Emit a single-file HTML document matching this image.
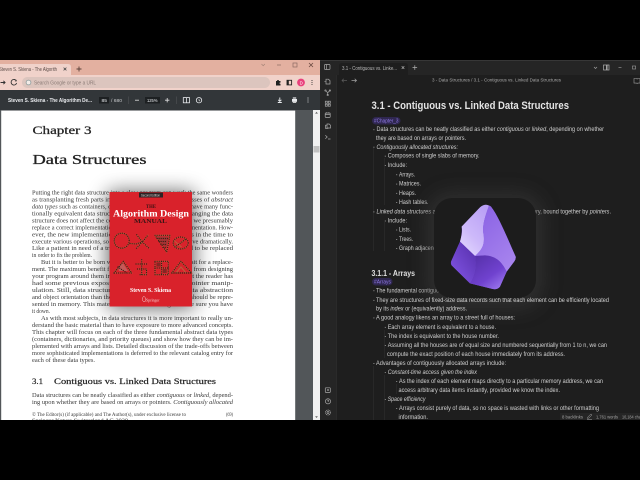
<!DOCTYPE html>
<html><head><meta charset="utf-8"><style>
html,body{margin:0;padding:0;background:#000;width:640px;height:480px;overflow:hidden}
svg{display:block;position:absolute;left:0;top:0}
.o{font-family:"Liberation Sans",sans-serif;font-size:6.3px;fill:#cfcfcf}
.oi{font-family:"Liberation Sans",sans-serif;font-size:6.3px;fill:#cfcfcf;font-style:italic}
.p{font-family:"Liberation Serif",serif;font-size:6.5px;fill:#3a3a3a}
.s{font-family:"Liberation Sans",sans-serif}
</style></head><body>
<svg width="640" height="480" viewBox="0 0 640 480" xmlns="http://www.w3.org/2000/svg">
<defs>
<filter id="b" x="-5%" y="-5%" width="110%" height="110%"><feGaussianBlur stdDeviation="0.3"/></filter>
<filter id="sh" x="-60%" y="-60%" width="220%" height="220%"><feGaussianBlur stdDeviation="10"/></filter>
<filter id="gl" x="-60%" y="-60%" width="220%" height="220%"><feGaussianBlur stdDeviation="9"/></filter>
<linearGradient id="g1" x1="0.8" y1="0" x2="0.2" y2="1"><stop offset="0" stop-color="#b9a0f5"/><stop offset="0.6" stop-color="#cdb9fa"/><stop offset="1" stop-color="#e2d6fd"/></linearGradient>
<linearGradient id="g2" x1="0.2" y1="0" x2="0.8" y2="1"><stop offset="0" stop-color="#8a62e4"/><stop offset="1" stop-color="#a885ee"/></linearGradient>
<linearGradient id="g3" x1="0.1" y1="0" x2="0.9" y2="1"><stop offset="0" stop-color="#5530a8"/><stop offset="0.6" stop-color="#7042cf"/><stop offset="1" stop-color="#a07df0"/></linearGradient>
<linearGradient id="g4" x1="0.9" y1="0.1" x2="0.2" y2="0.9"><stop offset="0" stop-color="#5a32b0"/><stop offset="1" stop-color="#7e52e0"/></linearGradient>
</defs>

<rect width="640" height="480" fill="#000"/>

<!-- LEFT: Chrome -->
<rect x="0" y="60" width="320" height="15" fill="#e3b0a0"/>
<path d="M0 64H68q3 0 3 3V75H0Z" fill="#f0d2ca"/>
<rect x="0" y="75" width="320" height="15" fill="#f1d2ca"/>
<rect x="22" y="77" width="248" height="11" rx="5.5" fill="#dcc5be"/>
<circle cx="28.5" cy="82.5" r="2.4" fill="#f3ece8" stroke="#8b9a9a" stroke-width="0.8"/>
<g filter="url(#b)">
<text class="s" x="-1" y="71" font-size="5.4" fill="#5a4a46" textLength="58" lengthAdjust="spacingAndGlyphs">Steven S. Skiena - The Algorith</text>
<path d="M63.6 67.6l2.8 2.8M66.4 67.6l-2.8 2.8" stroke="#444" stroke-width="0.8"/>
<path d="M76.5 69h5M79 66.5v5" stroke="#5a4038" stroke-width="0.9"/>
<path d="M261.5 64l1.7 1.7 1.700-1.700" stroke="#a58478" stroke-width="0.7" fill="none"/>
<path d="M277 65h4" stroke="#8a6a60" stroke-width="0.7"/>
<rect x="293" y="63" width="4" height="4" fill="none" stroke="#8a6a60" stroke-width="0.7"/>
<path d="M309 63l4 4M313 63l-4 4" stroke="#6a4a40" stroke-width="0.8"/>
<path d="M0.5 82.5h4.5M3.4 80.8l1.7 1.7-1.7 1.7" stroke="#333" stroke-width="0.9" fill="none"/>
<path d="M16.4 81a2.8 2.8 0 1 0 .2 2" stroke="#333" stroke-width="0.9" fill="none"/>
<path d="M16.6 79.6v1.8h-1.8z" fill="#333"/>
<text class="s" x="34" y="84.3" font-size="5.2" fill="#8a7a75" textLength="62" lengthAdjust="spacingAndGlyphs">Search Google or type a URL</text>
<path d="M276 81h1.2v-1h1.6v1h1.7v1.6h-.9v1.2h.9v1.7h-4.5z" fill="#222"/>
<rect x="287" y="80.3" width="4.6" height="4.6" fill="#f1d2ca" stroke="#222" stroke-width="0.9"/>
<rect x="287" y="80.3" width="1.8" height="4.6" fill="#222"/>
<circle cx="301" cy="82.5" r="3.9" fill="#e9407c"/>
<text class="s" x="299.6" y="84.3" font-size="4.4" fill="#fff">D</text>
<circle cx="312" cy="80.6" r=".55" fill="#333"/><circle cx="312" cy="82.5" r=".55" fill="#333"/><circle cx="312" cy="84.4" r=".55" fill="#333"/>
</g>

<!-- PDF toolbar -->
<rect x="0" y="90" width="320" height="20" fill="#323639"/>
<rect x="99" y="97" width="10" height="6.5" fill="#1d2022"/>
<rect x="145" y="97" width="15" height="6.5" fill="#1d2022"/>
<g filter="url(#b)">
<text class="s" x="8" y="102" font-size="5.2" font-weight="bold" fill="#e8eaed" textLength="84" lengthAdjust="spacingAndGlyphs">Steven S. Skiena - The Algorithm De...</text>
<text class="s" x="101.5" y="102" font-size="4.8" fill="#e8eaed" textLength="5.5" lengthAdjust="spacingAndGlyphs">85</text>
<text class="s" x="111" y="102" font-size="4.8" fill="#c8cacc" textLength="11" lengthAdjust="spacingAndGlyphs">/ 680</text>
<rect x="128.3" y="96.5" width=".5" height="7.5" fill="#55595c"/>
<path d="M135 100.2h4" stroke="#e0e0e0" stroke-width=".8"/>
<text class="s" x="147" y="102" font-size="4.8" fill="#e8eaed" textLength="10.5" lengthAdjust="spacingAndGlyphs">125%</text>
<path d="M165 100.2h4.4M167.2 98v4.4" stroke="#e0e0e0" stroke-width=".8"/>
<rect x="176" y="96.5" width=".5" height="7.5" fill="#55595c"/>
<rect x="183.3" y="97.6" width="6.2" height="5.2" fill="none" stroke="#e8eaed" stroke-width=".8"/><path d="M186.4 97.6v5.2" stroke="#e8eaed" stroke-width=".8"/>
<circle cx="199" cy="100.2" r="2.7" fill="none" stroke="#e8eaed" stroke-width=".8"/><path d="M199 98.7v1.6l1 .8" stroke="#e8eaed" stroke-width=".6" fill="none"/>
<path d="M279.8 97.5v3.4M278.2 99.8l1.6 1.6 1.6-1.6M277.8 102.5h4" stroke="#e8eaed" stroke-width=".9" fill="none"/>
<path d="M292 99h5v2.8h-5z" fill="#e8eaed"/><rect x="292.8" y="97.4" width="3.4" height="1.2" fill="#e8eaed"/><rect x="292.8" y="101.6" width="3.4" height="1.4" fill="#ccc"/>
<circle cx="308" cy="98" r=".55" fill="#e8eaed"/><circle cx="308" cy="100" r=".55" fill="#e8eaed"/><circle cx="308" cy="102" r=".55" fill="#e8eaed"/>
</g>

<!-- PDF viewer -->
<rect x="0" y="110" width="320" height="310" fill="#525659"/>
<rect x="1.2" y="110.6" width="294" height="310" fill="#fff"/>
<rect x="313" y="110" width="7" height="310" fill="#f1f1f1"/>
<rect x="313.5" y="146" width="6" height="6.5" fill="#c1c1c1"/>
<path d="M316.5 111.8l-1.4 1.8h2.8z" fill="#666"/><path d="M316.5 418l-1.4-1.8h2.8z" fill="#666"/>

<g filter="url(#b)">
<text x="32.5" y="134" font-family="Liberation Serif,serif" font-size="11.5" fill="#222" stroke="#222" stroke-width=".25" textLength="59" lengthAdjust="spacingAndGlyphs">Chapter 3</text>
<text x="32.5" y="164" font-family="Liberation Serif,serif" font-size="13.5" fill="#222" stroke="#222" stroke-width=".28" textLength="114" lengthAdjust="spacingAndGlyphs">Data Structures</text>
<text class="p" x="32" y="194.5" textLength="201" lengthAdjust="spacingAndGlyphs">Putting the right data structure into a slow program can work the same wonders</text>
<text class="p" x="32" y="201.5" textLength="201" lengthAdjust="spacingAndGlyphs">as transplanting fresh parts into a sick patient. Important classes of <tspan font-style="italic">abstract</tspan></text>
<text class="p" x="32" y="208.4" textLength="201" lengthAdjust="spacingAndGlyphs"><tspan font-style="italic">data types</tspan> such as containers, dictionaries, and priority queues have many func-</text>
<text class="p" x="32" y="215.4" textLength="201" lengthAdjust="spacingAndGlyphs">tionally equivalent data structures that implement them. Changing the data</text>
<text class="p" x="32" y="222.3" textLength="201" lengthAdjust="spacingAndGlyphs">structure does not affect the correctness of the program, since we presumably</text>
<text class="p" x="32" y="229.3" textLength="201" lengthAdjust="spacingAndGlyphs">replace a correct implementation with a different correct implementation. How-</text>
<text class="p" x="32" y="236.3" textLength="201" lengthAdjust="spacingAndGlyphs">ever, the new implementation realizes different trade-offs in the time to</text>
<text class="p" x="32" y="243.3" textLength="201" lengthAdjust="spacingAndGlyphs">execute various operations, so the total performance can improve dramatically.</text>
<text class="p" x="32" y="250.2" textLength="201" lengthAdjust="spacingAndGlyphs">Like a patient in need of a transplant, many programs need to be replaced</text>
<text class="p" x="32" y="257.2" textLength="60" lengthAdjust="spacingAndGlyphs">in order to fix the problem.</text>
<text class="p" x="41" y="264.2" textLength="192" lengthAdjust="spacingAndGlyphs">But it is better to be born with a good heart than have to wait for a replace-</text>
<text class="p" x="32" y="271.2" textLength="201" lengthAdjust="spacingAndGlyphs">ment. The maximum benefit from good data structures results from designing</text>
<text class="p" x="32" y="278.2" textLength="201" lengthAdjust="spacingAndGlyphs">your program around them in the first place. We assume that the reader has</text>
<text class="p" x="32" y="285.2" textLength="201" lengthAdjust="spacingAndGlyphs">had some previous exposure to data structures and pointer manip-</text>
<text class="p" x="32" y="292.2" textLength="201" lengthAdjust="spacingAndGlyphs">ulation. Still, data structure courses focus more on data abstraction</text>
<text class="p" x="32" y="299.2" textLength="201" lengthAdjust="spacingAndGlyphs">and object orientation than the nitty-gritty of how structures should be repre-</text>
<text class="p" x="32" y="306.2" textLength="201" lengthAdjust="spacingAndGlyphs">sented in memory. This material is worth reviewing to make sure you have</text>
<text class="p" x="32" y="313" textLength="18" lengthAdjust="spacingAndGlyphs">it down.</text>
<text class="p" x="41" y="320.2" textLength="192" lengthAdjust="spacingAndGlyphs">As with most subjects, in data structures it is more important to really un-</text>
<text class="p" x="32" y="327.2" textLength="201" lengthAdjust="spacingAndGlyphs">derstand the basic material than to have exposure to more advanced concepts.</text>
<text class="p" x="32" y="334.2" textLength="201" lengthAdjust="spacingAndGlyphs">This chapter will focus on each of the three fundamental abstract data types</text>
<text class="p" x="32" y="341.2" textLength="201" lengthAdjust="spacingAndGlyphs">(containers, dictionaries, and priority queues) and show how they can be im-</text>
<text class="p" x="32" y="348.2" textLength="201" lengthAdjust="spacingAndGlyphs">plemented with arrays and lists. Detailed discussion of the trade-offs between</text>
<text class="p" x="32" y="355.2" textLength="201" lengthAdjust="spacingAndGlyphs">more sophisticated implementations is deferred to the relevant catalog entry for</text>
<text class="p" x="32" y="362.2" textLength="63" lengthAdjust="spacingAndGlyphs">each of these data types.</text>
<text x="32" y="384" font-family="Liberation Serif,serif" font-size="8.4" fill="#222" stroke="#222" stroke-width=".2" textLength="11" lengthAdjust="spacingAndGlyphs">3.1</text>
<text x="54" y="384" font-family="Liberation Serif,serif" font-size="8.4" fill="#222" stroke="#222" stroke-width=".2" textLength="162" lengthAdjust="spacingAndGlyphs">Contiguous vs. Linked Data Structures</text>
<text class="p" x="32" y="396.8" textLength="201" lengthAdjust="spacingAndGlyphs">Data structures can be neatly classified as either <tspan font-style="italic">contiguous</tspan> or <tspan font-style="italic">linked</tspan>, depend-</text>
<text class="p" x="32" y="404" textLength="201" lengthAdjust="spacingAndGlyphs">ing upon whether they are based on arrays or pointers. <tspan font-style="italic">Contiguously allocated</tspan></text>
<text class="p" x="32" y="416" textLength="154" lengthAdjust="spacingAndGlyphs" style="font-size:5.2px">© The Editor(s) (if applicable) and The Author(s), under exclusive license to</text>
<text class="p" x="226" y="416" textLength="7" lengthAdjust="spacingAndGlyphs" style="font-size:5.4px">(69)</text>
<text class="p" x="32" y="422" textLength="96" lengthAdjust="spacingAndGlyphs" style="font-size:5.2px">Springer Nature Switzerland AG 2020</text>
</g>

<!-- Book -->
<rect x="108" y="192" width="86" height="116" fill="#000" opacity=".62" filter="url(#sh)"/>
<rect x="109.5" y="192" width="82.5" height="114.5" fill="#d9222b"/>
<rect x="139" y="192.5" width="24" height="5" fill="#2c2224"/>
<g filter="url(#b)">
<text class="s" x="141" y="196.4" font-size="3.4" fill="#ddd" textLength="19" lengthAdjust="spacingAndGlyphs">Second Edition</text>
<text x="146" y="208" font-family="Liberation Serif,serif" font-size="5.2" font-weight="bold" fill="#3a1414" textLength="10" lengthAdjust="spacingAndGlyphs">THE</text>
<text x="113" y="216.5" font-family="Liberation Serif,serif" font-size="9.2" font-weight="bold" fill="#fff" textLength="76" lengthAdjust="spacingAndGlyphs">Algorithm Design</text>
<text x="134" y="223" font-family="Liberation Serif,serif" font-size="6" font-weight="bold" fill="#3a1414" textLength="33" lengthAdjust="spacingAndGlyphs">MANUAL</text>
<!-- illustrations -->
<g fill="none" stroke="#b9603c" stroke-width="1.1" opacity=".95">
<circle cx="121.7" cy="240.7" r="7.5"/>
<path d="M130 243.500l6 .5 6-2M136.700 234.700l5.600 7.300 6-7.300M142.300 242l-6 6.500M142.300 242l7 6.500"/>
<path d="M155 235.300h15l-3.300 16.700z"/>
<ellipse cx="180.700" cy="243" rx="7.500" ry="6"/><path d="M175 247l11-8M174.500 241l7 6"/>
<path d="M114 273l9.300-11.500 8.400 11.500zM114 273h18"/>
<path d="M136 264h11.500M141.700 259.700v15M137.500 269h9v5.700h-7"/>
<rect x="155" y="261.300" width="13.300" height="13.400"/><path d="M155 268h13.300M161.600 261.300v13.400"/>
<path d="M171.700 273l9.300-11.700 10.700 11.700zM176 273l5-6 5 6"/>
</g>
<path d="M118 267l5-4 5 8h-9z" fill="#c45a58"/>
<path d="M156 236.500h12.500l-2.300 11.500z" fill="#8a3a36" opacity=".7"/>
<g fill="#6a2a20" opacity=".75"><rect x="156.500" y="262.500" width="4" height="4"/><rect x="162.700" y="269" width="4" height="4"/></g>
<g fill="none" stroke="#3a1a14" stroke-width="1.200" stroke-linecap="round" stroke-dasharray=".1 2">
<circle cx="121.700" cy="240.700" r="7.500"/>
<path d="M130 243.500l6 .5 6-2M136.700 234.700l5.600 7.300 6-7.300M142.300 242l-6 6.500M142.300 242l7 6.500"/>
<path d="M155 235.300h15l-3.300 16.700zM157 238.500h11M159 241.500h8M161 244.500h6M163 247.500h3"/>
<ellipse cx="180.700" cy="243" rx="7.500" ry="6"/><path d="M175 247l11-8"/>
<path d="M114 273l9.300-11.500 8.400 11.500zM118 267l9 6"/>
<path d="M136 264h11.500M141.700 259.700v15M137.500 269h9v5.700h-7"/>
<rect x="155" y="261.300" width="13.300" height="13.400"/><path d="M155 268h13.300M161.600 261.300v13.400"/>
<path d="M171.700 273l9.300-11.700 10.700 11.700zM171.700 273h20"/>
</g>
<text x="130" y="292" font-family="Liberation Serif,serif" font-size="5.800" font-weight="bold" fill="#fff" textLength="41" lengthAdjust="spacingAndGlyphs">Steven S. Skiena</text>
<path d="M143.500 296.500c-1.500 1.400-1.500 4 0 5h1.600c1-1 1-3.600-.8-5z" fill="none" stroke="#f4d0d0" stroke-width=".5"/>
<text x="146" y="301.300" font-family="Liberation Serif,serif" font-size="4" fill="#f4d0d0" textLength="13.500" lengthAdjust="spacingAndGlyphs">Springer</text>
</g>

<!-- RIGHT: Obsidian -->
<rect x="320" y="60" width="320" height="360" fill="#1e1e1e"/>
<rect x="320" y="60" width="320" height="15" fill="#252525"/>
<rect x="320" y="60" width="16" height="360" fill="#252525"/>
<rect x="320" y="60" width="320" height=".8" fill="#3c3c3c"/>
<rect x="336" y="75" width=".6" height="345" fill="#333"/>
<path d="M339 75v-9q0-3 3-3h63q3 0 3 3v9z" fill="#1e1e1e"/>
<g filter="url(#b)">
<rect x="324.500" y="64.500" width="5.500" height="5" rx=".8" fill="none" stroke="#a8a8a8" stroke-width=".7"/><path d="M326.500 64.500v5" stroke="#a8a8a8" stroke-width=".7"/>
<text class="s" x="342" y="70" font-size="5" fill="#b8b8b8" textLength="55" lengthAdjust="spacingAndGlyphs">3.1 - Contiguous vs. Linke...</text>
<path d="M401.700 66.300l2.600 2.600M404.300 66.300l-2.600 2.600" stroke="#b0b0b0" stroke-width=".7"/>
<path d="M412.500 67.600h4.600M414.800 65.300v4.600" stroke="#b0b0b0" stroke-width=".7"/>
<path d="M594 67l1.500 1.500 1.500-1.500" stroke="#a0a0a0" stroke-width=".7" fill="none"/>
<rect x="603.500" y="65" width="5.500" height="5" fill="none" stroke="#b0b0b0" stroke-width=".7"/><path d="M606.800 65v5" stroke="#b0b0b0" stroke-width="1.400"/>
<path d="M618.500 67.500h3" stroke="#909090" stroke-width=".7"/>
<rect x="632.500" y="66" width="3" height="3" fill="none" stroke="#909090" stroke-width=".7"/>
<path d="M342 80.500h5M343.800 78.800l-1.800 1.700 1.800 1.700" stroke="#5a5a5a" stroke-width=".7" fill="none"/>
<path d="M351.500 80.500h5M354.700 78.800l1.800 1.700-1.800 1.700" stroke="#a0a0a0" stroke-width=".7" fill="none"/>
<text class="s" x="432" y="81.700" font-size="4.800" fill="#a8a8a8" textLength="129" lengthAdjust="spacingAndGlyphs">3 - Data Structures  /  3.1 - Contiguous vs. Linked Data Structures</text>
<path d="M634 78.500h2.500l.6.600.6-.6h2.300v4.600h-2.300l-.6.400-.6-.4h-2.500z" fill="none" stroke="#a0a0a0" stroke-width=".6"/>
<g fill="none" stroke="#a8a8a8" stroke-width=".7">
<path d="M326 79.200h2.500l1.500 1.500v3.300h-4zM325 82v-1"/>
<path d="M325.500 90.500l2.200 2.200 2.200-2.200M327.700 92.700v2.300"/><circle cx="325.500" cy="90.500" r=".7"/><circle cx="329.900" cy="90.500" r=".7"/><circle cx="327.700" cy="95" r=".7"/>
<rect x="325.300" y="101.200" width="2" height="2"/><rect x="328.300" y="101.200" width="2" height="2"/><rect x="325.300" y="104.200" width="2" height="2"/><rect x="328.300" y="104.200" width="2" height="2"/>
<rect x="325.200" y="113" width="5" height="4.400" rx=".6"/><path d="M325.200 114.600h5M326.600 112.300v1.200M328.800 112.300v1.200"/>
<path d="M327 124h2.200l1.300 1.300v2.700h-3.500zM326.800 125.200h-1.300v3.200h2.800"/>
<path d="M325.300 135.300l1.900 1.700-1.900 1.700M328 139h2.500"/>
<rect x="325.300" y="387.800" width="5" height="4.600" rx=".5"/><path d="M327 390h2M328 389v2"/>
<circle cx="328" cy="401.300" r="2.600"/><path d="M327.200 400.500c.3-.9 1.700-.7 1.600.2-.1.600-.8.600-.8 1.200"/>
<circle cx="328" cy="412.500" r="1"/><circle cx="328" cy="412.500" r="2.500" stroke-dasharray="1.100 .5"/>
</g>
</g>

<!-- Indent guides -->
<g fill="#323232">
<rect x="373" y="148" width=".5" height="103"/>
<rect x="384.500" y="158" width=".5" height="47"/>
<rect x="384.500" y="222" width=".5" height="29"/>
<rect x="373" y="366" width=".5" height="54"/>
<rect x="384.500" y="375" width=".5" height="45"/>
<rect x="396" y="384" width=".5" height="10"/>
<rect x="384.500" y="330" width=".5" height="28"/>
</g>

<rect x="372" y="117" width="28.500" height="7.500" rx="3.700" fill="#2f2750"/>
<rect x="372" y="278" width="20.500" height="7.500" rx="3.700" fill="#2f2750"/>

<g filter="url(#b)">
<text x="371.500" y="109" font-family="Liberation Sans,sans-serif" font-weight="bold" font-size="10.600" fill="#e4e4e4" textLength="197.500" lengthAdjust="spacingAndGlyphs">3.1 - Contiguous vs. Linked Data Structures</text>
<text class="s" x="374" y="122.600" font-size="5.400" fill="#8f78e6" textLength="24.500" lengthAdjust="spacingAndGlyphs">#Chapter_3</text>

<g fill="#909090">
<rect x="373.400" y="129.200" width="1" height="1"/><rect x="373.400" y="146.700" width="1" height="1"/>
<rect x="384.800" y="155.700" width="1" height="1"/><rect x="384.800" y="165" width="1" height="1"/>
<rect x="396.200" y="174.200" width="1" height="1"/><rect x="396.200" y="183.600" width="1" height="1"/><rect x="396.200" y="192.900" width="1" height="1"/><rect x="396.200" y="202" width="1" height="1"/>
<rect x="373.400" y="211.400" width="1" height="1"/><rect x="384.800" y="220.500" width="1" height="1"/>
<rect x="396.200" y="229.500" width="1" height="1"/><rect x="396.200" y="239" width="1" height="1"/><rect x="396.200" y="248" width="1" height="1"/>
<rect x="373.400" y="290.200" width="1" height="1"/><rect x="373.400" y="299.900" width="1" height="1"/><rect x="373.400" y="317.400" width="1" height="1"/>
<rect x="384.800" y="326.900" width="1" height="1"/><rect x="384.800" y="336" width="1" height="1"/><rect x="384.800" y="345" width="1" height="1"/>
<rect x="373.400" y="363" width="1" height="1"/><rect x="384.800" y="372" width="1" height="1"/>
<rect x="396.200" y="381" width="1" height="1"/><rect x="384.800" y="399" width="1" height="1"/><rect x="396.200" y="408" width="1" height="1"/>
</g>

<text class="o" x="376.500" y="131" textLength="227.500" lengthAdjust="spacingAndGlyphs">Data structures can be neatly classified as either <tspan font-style="italic">contiguous</tspan> or <tspan font-style="italic">linked</tspan>, depending on whether</text>
<text class="o" x="376" y="140" textLength="90" lengthAdjust="spacingAndGlyphs">they are based on arrays or pointers.</text>
<text class="oi" x="376.500" y="149" textLength="81.500" lengthAdjust="spacingAndGlyphs">Contiguously allocated structures:</text>
<text class="o" x="387.700" y="157.700" textLength="91.800" lengthAdjust="spacingAndGlyphs">Composes of single slabs of memory.</text>
<text class="o" x="387.700" y="167" textLength="19.300" lengthAdjust="spacingAndGlyphs">Include:</text>
<text class="o" x="399" y="176.300" textLength="16" lengthAdjust="spacingAndGlyphs">Arrays.</text>
<text class="o" x="399" y="185.700" textLength="22" lengthAdjust="spacingAndGlyphs">Matrices.</text>
<text class="o" x="399" y="195" textLength="17" lengthAdjust="spacingAndGlyphs">Heaps.</text>
<text class="o" x="399" y="204" textLength="29.500" lengthAdjust="spacingAndGlyphs">Hash tables.</text>
<text class="o" x="376.500" y="213.500" textLength="234.500" lengthAdjust="spacingAndGlyphs"><tspan font-style="italic">Linked data structures</tspan> are assembled in distinct chunks of memory, bound together by <tspan font-style="italic">pointers</tspan>.</text>
<text class="o" x="387.700" y="222.500" textLength="19.300" lengthAdjust="spacingAndGlyphs">Include:</text>
<text class="o" x="399" y="231.500" textLength="12" lengthAdjust="spacingAndGlyphs">Lists.</text>
<text class="o" x="399" y="241" textLength="14" lengthAdjust="spacingAndGlyphs">Trees.</text>
<text class="o" x="399" y="250" textLength="52" lengthAdjust="spacingAndGlyphs">Graph adjacency lists.</text>
<text x="371.500" y="276" font-family="Liberation Sans,sans-serif" font-weight="bold" font-size="8.200" fill="#e0e0e0" textLength="43.500" lengthAdjust="spacingAndGlyphs">3.1.1 - Arrays</text>
<text class="s" x="374" y="283.600" font-size="5.400" fill="#8f78e6" textLength="17" lengthAdjust="spacingAndGlyphs">#Arrays</text>
<text class="o" x="376" y="292.300" textLength="134" lengthAdjust="spacingAndGlyphs">The fundamental contiguous data structures are arrays.</text>
</g>

<!-- Obsidian logo glow -->
<rect x="426" y="192" width="118" height="118" rx="26" fill="#3a3a3a" opacity=".55" filter="url(#gl)"/>

<g filter="url(#b)">
<text class="o" x="376" y="302" textLength="233" lengthAdjust="spacingAndGlyphs">They are structures of fixed-size data records such that each element can be efficiently located</text>
<text class="o" x="376" y="310.500" textLength="91" lengthAdjust="spacingAndGlyphs">by its <tspan font-style="italic">index</tspan> or (equivalently) address.</text>
<text class="o" x="376" y="319.500" textLength="139" lengthAdjust="spacingAndGlyphs">A good analogy likens an array to a street full of houses:</text>
<text class="o" x="387.700" y="329" textLength="108.300" lengthAdjust="spacingAndGlyphs">Each array element is equivalent to a house.</text>
<text class="o" x="387.700" y="338" textLength="111.300" lengthAdjust="spacingAndGlyphs">The index is equivalent to the house number.</text>
<text class="o" x="387.700" y="347" textLength="219.300" lengthAdjust="spacingAndGlyphs">Assuming all the houses are of equal size and numbered sequentially from 1 to n, we can</text>
<text class="o" x="387" y="356" textLength="178" lengthAdjust="spacingAndGlyphs">compute the exact position of each house immediately from its address.</text>
<text class="o" x="376" y="365" textLength="130" lengthAdjust="spacingAndGlyphs">Advantages of contiguously allocated arrays include:</text>
<text class="oi" x="387.700" y="374" textLength="89.300" lengthAdjust="spacingAndGlyphs">Constant-time access given the index</text>
<text class="o" x="399" y="383" textLength="204" lengthAdjust="spacingAndGlyphs">As the index of each element maps directly to a particular memory address, we can</text>
<text class="o" x="398.500" y="392" textLength="161.500" lengthAdjust="spacingAndGlyphs">access arbitrary data items instantly, provided we know the index.</text>
<text class="oi" x="387.700" y="401" textLength="37.800" lengthAdjust="spacingAndGlyphs">Space efficiency</text>
<text class="o" x="399" y="410" textLength="200" lengthAdjust="spacingAndGlyphs">Arrays consist purely of data, so no space is wasted with links or other formatting</text>
<text class="o" x="398.500" y="419" textLength="29.500" lengthAdjust="spacingAndGlyphs">information.</text>
</g>

<rect x="434" y="198" width="102" height="100" rx="18" fill="#1c1c1c"/>
<g transform="translate(425 190) scale(.33333)">
<path d="M165 52Q182 38 198 50C215 72 232 110 250 150Q262 178 272 200Q273 208 268 214L245 245L225 290Q218 300 203 297L135 280L80 226Q76 220 79 213L105 155Q112 130 110 110Z" fill="#7a50d8"/>
<path d="M165 52Q180 40 192 47C180 80 170 110 176 135C180 165 170 180 150 198L105 155C112 130 112 120 110 110Z" fill="url(#g1)"/>
<path d="M192 47Q195 47 198 50C215 72 232 110 250 150Q262 178 272 200Q273 208 268 214L245 245C232 218 215 198 180 196L150 198C170 180 180 165 176 135C170 110 180 80 192 47Z" fill="url(#g2)"/>
<path d="M150 198L180 196C215 198 232 218 245 245L225 290Q218 300 203 297L135 280C150 255 155 225 150 198Z" fill="url(#g3)"/>
<path d="M105 155L150 198C155 225 150 255 135 280L80 226Q76 220 79 213Z" fill="url(#g4)"/>
</g>

<!-- Status bar -->
<rect x="560" y="413" width="80" height="7" fill="#252525"/>
<g filter="url(#b)">
<text class="s" x="562" y="418.600" font-size="4.600" fill="#a0a0a0" textLength="21" lengthAdjust="spacingAndGlyphs">8 backlinks</text>
<path d="M587.500 418.500l.4-1.500 3-3 1 1-3 3zM587 419.300h5" stroke="#a8a8a8" stroke-width=".5" fill="none"/>
<text class="s" x="596" y="418.600" font-size="4.600" fill="#a0a0a0" textLength="22" lengthAdjust="spacingAndGlyphs">1,761 words</text>
<text class="s" x="622" y="418.600" font-size="4.600" fill="#a0a0a0" textLength="22" lengthAdjust="spacingAndGlyphs">10,184 chars</text>
</g>
<rect x="0" y="420" width="640" height="60" fill="#000"/>
</svg>
</body></html>
